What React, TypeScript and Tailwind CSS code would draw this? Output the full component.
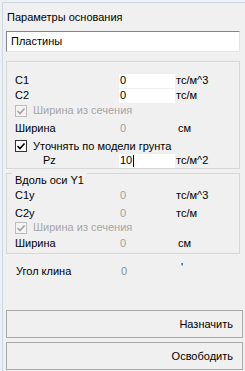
import type { ReactNode } from 'react';

const font = { fontFamily: '"Liberation Sans", Arial, sans-serif' };

function CheckBox({ checked, disabled }: { checked: boolean; disabled?: boolean }) {
  const stroke = disabled ? '#a3a3a3' : '#000000';
  return (
    <span
      className={`flex h-[12px] w-[12px] shrink-0 items-center justify-center border ${
        disabled ? 'border-[#bcbcbc] bg-[#f4f4f4]' : 'border-[#333333] bg-white'
      }`}
    >
      {checked && (
        <svg width="10" height="10" viewBox="0 0 10 10">
          <path d="M1.5 5 L4 7.5 L8.5 2.5" fill="none" stroke={stroke} strokeWidth="1.6" />
        </svg>
      )}
    </span>
  );
}

function Row({
  label,
  value,
  unit,
  editable,
  height = 'h-[15px]',
  margin = '',
  labelPad = '',
  caret,
  unitPad = 'ml-[1px]',
}: {
  label: string;
  value: string;
  unit: string;
  editable?: boolean;
  height?: string;
  margin?: string;
  labelPad?: string;
  caret?: boolean;
  unitPad?: string;
}) {
  return (
    <div className={`flex items-center ${height} ${margin}`}>
      <span className={`w-[104px] shrink-0 ${labelPad}`}>{label}</span>
      {editable ? (
        <span className="flex h-[14px] w-[56px] shrink-0 items-center bg-white pl-[1px]">
          {value}
          {caret && <span className="ml-[1px] h-[12px] w-px bg-black" />}
        </span>
      ) : (
        <span className="w-[56px] shrink-0 pl-[1px] text-[#9f9f9f]">{value}</span>
      )}
      <span className={unitPad}>{unit}</span>
    </div>
  );
}

function CheckRow({
  label,
  checked,
  disabled,
  height = 'h-[15px]',
  margin = '',
}: {
  label: string;
  checked: boolean;
  disabled?: boolean;
  height?: string;
  margin?: string;
}) {
  return (
    <div className={`flex items-center ${height} ${margin}`}>
      <CheckBox checked={checked} disabled={disabled} />
      <span className={`ml-[6px] ${disabled ? 'text-[#a6a6a6]' : ''}`}>{label}</span>
    </div>
  );
}

function Group({ title, children, className = '' }: { title?: string; children: ReactNode; className?: string }) {
  return (
    <div className={`relative mx-[3px] w-[234px] border border-[#d7d7d7] pl-[8px] ${className}`}>
      {title && (
        <span className="absolute left-[5px] top-[-1px] flex h-[15px] items-center bg-[#f0f0f0] px-[3px]">
          {title}
        </span>
      )}
      {children}
    </div>
  );
}

export default function App() {
  return (
    <div className="h-[371px] w-[245px] overflow-hidden bg-[#f0f0f0] pl-[2px] pt-[2px] text-[11px] text-black" style={font}>
      <div className="flex h-full flex-col border-l border-t border-[#c9d7e6]">
        <div className="ml-[4px] mt-[7px] flex h-[15px] items-center">Параметры основания</div>

        <div className="mx-[3px] mt-[6px] flex h-[21px] w-[234px] items-center border border-b-[#e3e3e3] border-l-[#858585] border-r-[#e3e3e3] border-t-[#858585] bg-white pl-[4px]">
          Пластины
        </div>

        <Group className="mt-[9px]">
          <Row label="C1" value="0" unit="тс/м^3" editable margin="mt-[11px]" />
          <Row label="C2" value="0" unit="тс/м" editable />
          <CheckRow label="Ширина из сечения" checked disabled />
          <Row label="Ширина" value="0" unit="см" margin="mt-[3px]" unitPad="ml-[3px]" />
          <CheckRow label="Уточнять по модели грунта" checked margin="mt-[3px]" height="h-[14px]" />
          <Row label="Pz" value="10" unit="тс/м^2" editable caret labelPad="pl-[28px]" />
        </Group>

        <Group title="Вдоль оси Y1" className="mt-[4px] pb-[2px]">
          <Row label="C1y" value="0" unit="тс/м^3" margin="mt-[14px]" />
          <Row label="C2y" value="0" unit="тс/м" margin="mt-[3px]" height="h-[14px]" />
          <CheckRow label="Ширина из сечения" checked disabled />
          <Row label="Ширина" value="0" unit="см" margin="mt-[1px]" unitPad="ml-[3px]" />
        </Group>

        <div className="ml-[13px] mt-[10px] flex h-[15px] items-center">
          <span className="w-[105px] shrink-0">Угол клина</span>
          <span className="w-[60px] shrink-0 text-[#7d90a6]">0</span>
          <span className="-mt-[8px]">'</span>
        </div>

        <div className="mx-[3px] mt-auto mb-[1px] flex flex-col gap-[4px]">
          <button className="flex h-[28px] w-[237px] items-center justify-end border border-[#a9a9a9] bg-[#f0f0f0] pr-[9px]">
            Назначить
          </button>
          <button className="flex h-[28px] w-[237px] items-center justify-end border border-[#a9a9a9] bg-[#f0f0f0] pr-[9px]">
            Освободить
          </button>
        </div>
      </div>
    </div>
  );
}
